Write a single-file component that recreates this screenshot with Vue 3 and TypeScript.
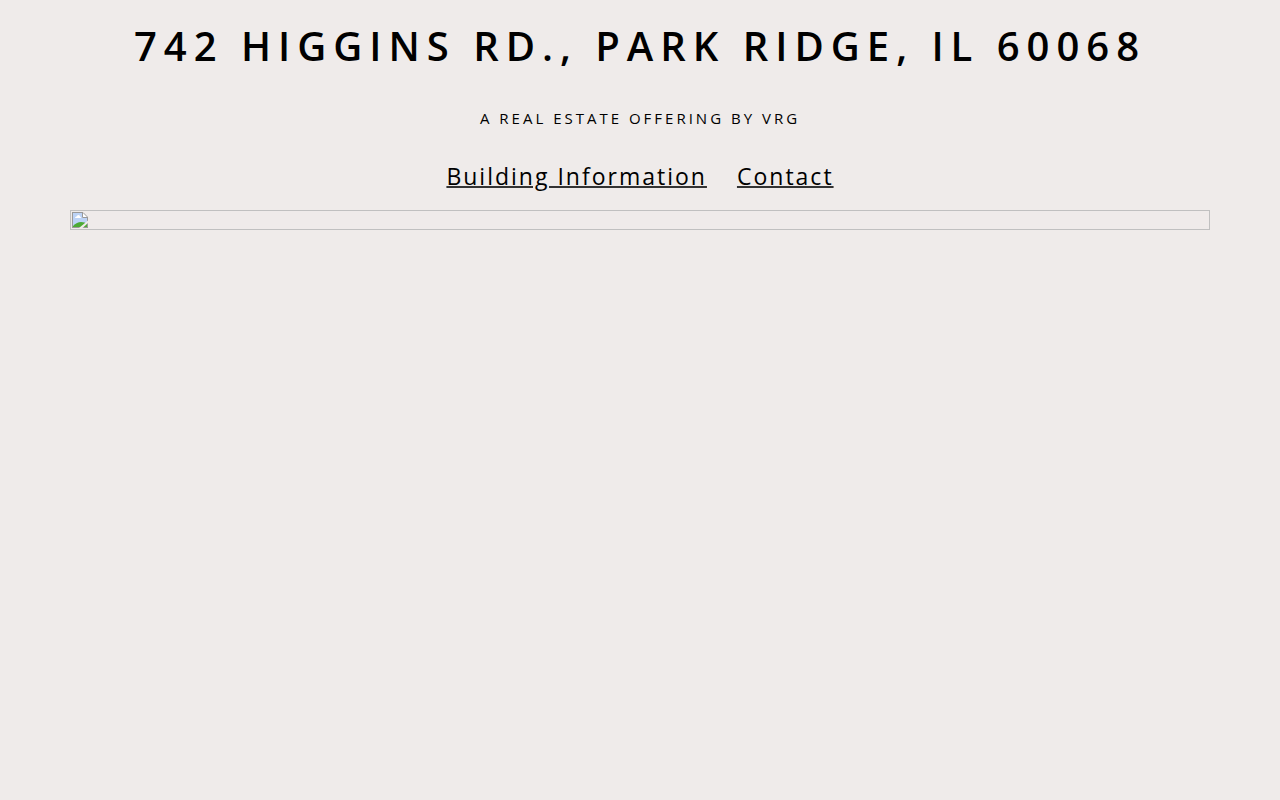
<script setup lang="ts">
interface NavLink {
  label: string
  href: string
}

const links: NavLink[] = [
  { label: 'Building Information', href: '#building' },
  { label: 'Contact', href: '#contact' },
]
</script>

<template>
  <main class="page">
    <h1 class="title">742 HIGGINS RD., PARK RIDGE, IL 60068</h1>
    <p class="tagline">A REAL ESTATE OFFERING BY VRG</p>
    <nav class="links">
      <a v-for="link in links" :key="link.href" class="link" :href="link.href">{{ link.label }}</a>
    </nav>
    <div class="photo">
      <svg class="photo-icon" width="16" height="16" viewBox="0 0 16 16" aria-hidden="true">
        <path d="M0 0H11L16 5V16H0Z" fill="#fff" />
        <path d="M1 1H10V6H15V15H1Z" fill="#bcd3f6" />
        <path d="M3 6Q3 4.500 4.500 4.500Q5 3 6.500 3Q8 3 8 4.500Q9 4.500 9 6Z" fill="#fff" />
        <path d="M1 15V14Q5 10 9 10Q13 10 15 12V15Z" fill="#4caa35" />
        <path d="M0 .5H11L15.500 5V16M.5 0V16M0 15.500H16M10.500 .5V5.500H16" fill="none" stroke="#999" />
        <path d="M16 8.500L7 16H10.500L16 11Z" fill="#efebea" />
      </svg>
    </div>
  </main>
</template>

<style>
body {
  margin: 0;
  background: #efebea;
}
</style>

<style scoped>
.page {
  box-sizing: border-box;
  max-width: 1170px;
  margin: 0 auto;
  padding: 20px 15px;
  color: #000;
  font-family: 'Segoe UI', 'Open Sans', 'Noto Sans', sans-serif;
  text-align: center;
}

.title {
  margin: 0 0 40px;
  font-size: 40px;
  font-weight: 600;
  line-height: 51px;
  letter-spacing: 7px;
}

.tagline {
  margin: 0 0 39px;
  font-size: 15px;
  line-height: 14px;
  letter-spacing: 3px;
}

.links {
  display: flex;
  justify-content: center;
  gap: 30px;
  margin-bottom: 22px;
}

.link {
  color: #000;
  font-size: 23px;
  line-height: 24px;
  letter-spacing: 2px;
  text-decoration: underline #333 2px;
}

.photo {
  box-sizing: border-box;
  display: flex;
  padding: 1px;
  border: 1px solid #c0c0c0;
}

.photo-icon {
  display: block;
}
</style>
